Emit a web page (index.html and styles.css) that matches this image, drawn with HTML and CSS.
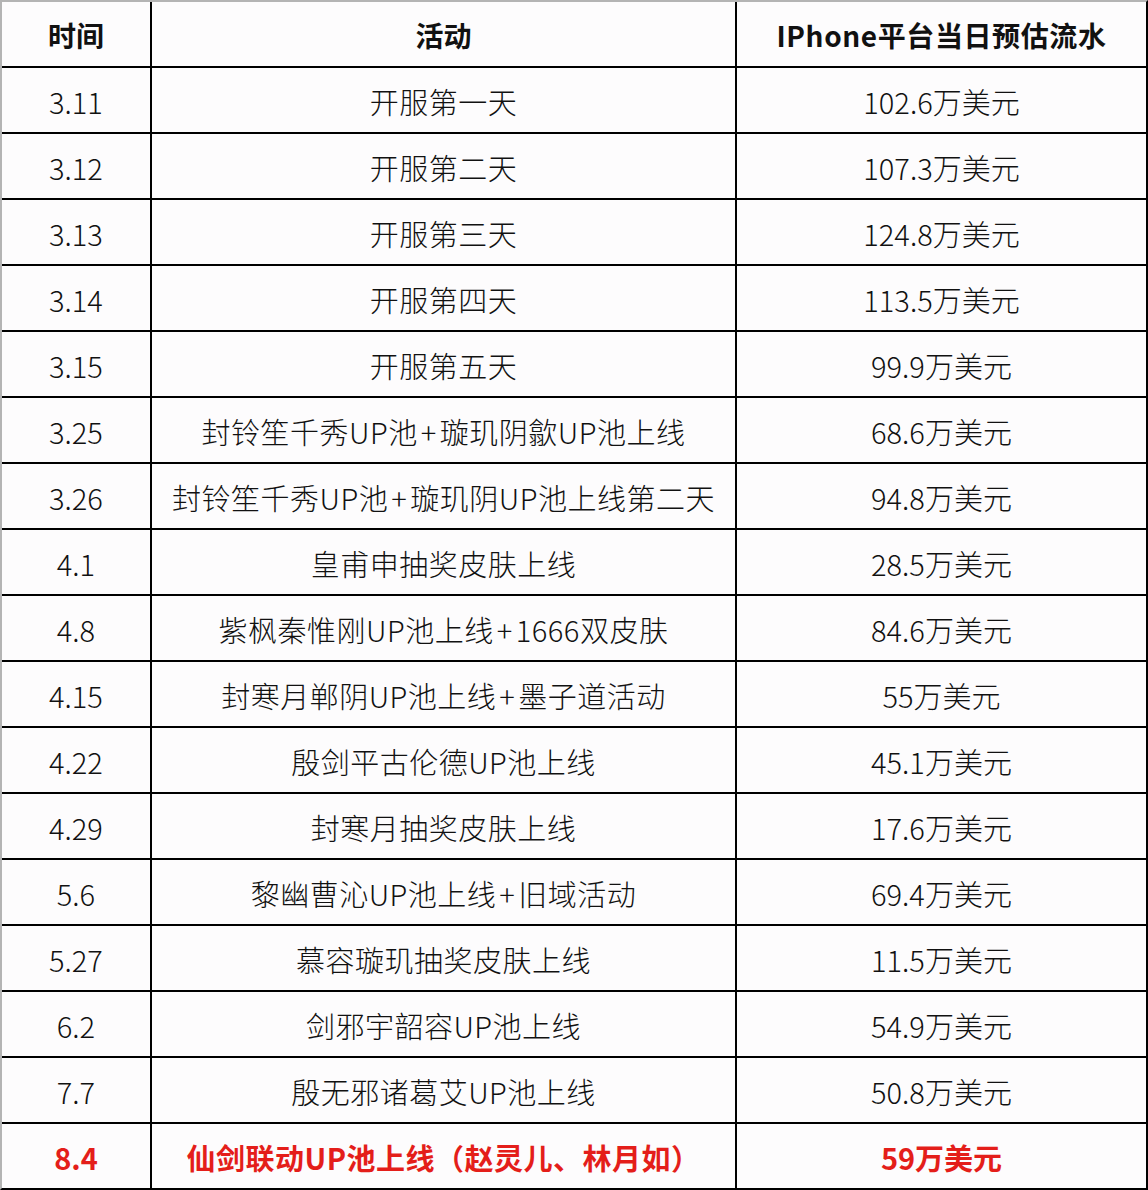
FILE: index.html
```html
<!DOCTYPE html>
<html lang="zh-CN">
<head>
<meta charset="utf-8">
<title>流水表</title>
<link rel="stylesheet" href="styles.css">
</head>
<body>
<div class="sheet">
  <div class="cell head">时间</div>
  <div class="cell head">活动</div>
  <div class="cell head wide">IPhone平台当日预估流水</div>

  <div class="cell">3.11</div><div class="cell act">开服第一天</div><div class="cell">102.6万美元</div>
  <div class="cell">3.12</div><div class="cell act">开服第二天</div><div class="cell">107.3万美元</div>
  <div class="cell">3.13</div><div class="cell act">开服第三天</div><div class="cell">124.8万美元</div>
  <div class="cell">3.14</div><div class="cell act">开服第四天</div><div class="cell">113.5万美元</div>
  <div class="cell">3.15</div><div class="cell act">开服第五天</div><div class="cell">99.9万美元</div>
  <div class="cell">3.25</div><div class="cell act">封铃笙千秀UP池<span class="plus">+</span>璇玑阴歙UP池上线</div><div class="cell">68.6万美元</div>
  <div class="cell">3.26</div><div class="cell act">封铃笙千秀UP池<span class="plus">+</span>璇玑阴UP池上线第二天</div><div class="cell">94.8万美元</div>
  <div class="cell">4.1</div><div class="cell act">皇甫申抽奖皮肤上线</div><div class="cell">28.5万美元</div>
  <div class="cell">4.8</div><div class="cell act">紫枫秦惟刚UP池上线<span class="plus">+</span>1666双皮肤</div><div class="cell">84.6万美元</div>
  <div class="cell">4.15</div><div class="cell act">封寒月郸阴UP池上线<span class="plus">+</span>墨子道活动</div><div class="cell">55万美元</div>
  <div class="cell">4.22</div><div class="cell act">殷剑平古伦德UP池上线</div><div class="cell">45.1万美元</div>
  <div class="cell">4.29</div><div class="cell act">封寒月抽奖皮肤上线</div><div class="cell">17.6万美元</div>
  <div class="cell">5.6</div><div class="cell act">黎幽曹沁UP池上线<span class="plus">+</span>旧域活动</div><div class="cell">69.4万美元</div>
  <div class="cell">5.27</div><div class="cell act">慕容璇玑抽奖皮肤上线</div><div class="cell">11.5万美元</div>
  <div class="cell">6.2</div><div class="cell act">剑邪宇韶容UP池上线</div><div class="cell">54.9万美元</div>
  <div class="cell">7.7</div><div class="cell act">殷无邪诸葛艾UP池上线</div><div class="cell">50.8万美元</div>
  <div class="cell hot">8.4</div><div class="cell hot act">仙剑联动UP池上线（赵灵儿、林月如）</div><div class="cell hot">59万美元</div>
</div>
</body>
</html>
```

FILE: styles.css
```css
html, body {
  margin: 0;
  padding: 0;
  background: #ffffff;
}

.sheet {
  width: 1144px;
  display: grid;
  grid-template-columns: 148px 583px 409px;
  grid-auto-rows: 64px;
  gap: 2px;
  background: #000000;
  border-top: 2px solid #b4b4b4;
  border-left: 2px solid #b4b4b4;
  border-right: 2px solid #000000;
  border-bottom: 2px solid #000000;
  font-family: "Noto Sans CJK SC", "Noto Sans", sans-serif;
}

.cell {
  background: #fdfcfd;
  display: flex;
  align-items: center;
  justify-content: center;
  font-size: 29px;
  font-weight: 300;
  color: #111111;
  white-space: nowrap;
  line-height: 1;
  padding-top: 2px;
  box-sizing: border-box;
}

.act {
  letter-spacing: 0.5px;
}

.plus {
  margin: 0 3px;
}

.head {
  font-weight: 700;
  font-size: 28px;
}

.wide {
  letter-spacing: 0.6px;
}

.hot {
  color: #e41e1a;
  font-weight: 700;
}
```
